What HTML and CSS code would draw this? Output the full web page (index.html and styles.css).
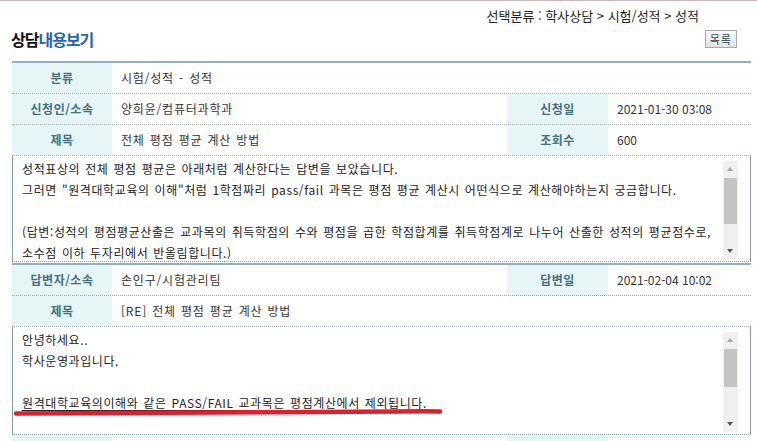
FILE: index.html
```html
<!DOCTYPE html>
<html lang="ko">
<head>
<meta charset="utf-8">
<title>상담내용보기</title>
<link rel="stylesheet" href="styles.css">
</head>
<body>
<div class="page">
  <div class="crumb">선택분류 : 학사상담 &gt; 시험/성적 &gt; 성적</div>
  <div class="titlebar">
    <h1 class="title">상담<span class="blue">내용보기</span></h1>
    <button class="btn">목록</button>
  </div>

  <div class="board">
    <div class="row">
      <div class="th">분류</div>
      <div class="td wide">시험/성적 - 성적</div>
    </div>
    <div class="row">
      <div class="th">신청인/소속</div>
      <div class="td">양희윤/컴퓨터과학과</div>
      <div class="th">신청일</div>
      <div class="td num">2021-01-30 03:08</div>
    </div>
    <div class="row">
      <div class="th">제목</div>
      <div class="td">전체 평점 평균 계산 방법</div>
      <div class="th">조회수</div>
      <div class="td num">600</div>
    </div>
    <div class="box box-q">
      <div class="text">성적표상의 전체 평점 평균은 아래처럼 계산한다는 답변을 보았습니다.<br>그러면 "원격대학교육의 이해"처럼 1학점짜리 pass/fail 과목은 평점 평균 계산시 어떤식으로 계산해야하는지 궁금합니다.<br><br>(답변:성적의 평점평균산출은 교과목의 취득학점의 수와 평점을 곱한 학점합계를 취득학점계로 나누어 산출한 성적의 평균점수로,<br>소수점 이하 두자리에서 반올림합니다.)</div>
      <div class="scroll scroll-q">
        <div class="arrow up"></div>
        <div class="track"><div class="thumb"></div></div>
        <div class="arrow down"></div>
      </div>
    </div>
  </div>

  <div class="board board-a">
    <div class="row">
      <div class="th">답변자/소속</div>
      <div class="td">손인구/시험관리팀</div>
      <div class="th">답변일</div>
      <div class="td num">2021-02-04 10:02</div>
    </div>
    <div class="row">
      <div class="th">제목</div>
      <div class="td wide">[RE] 전체 평점 평균 계산 방법</div>
    </div>
    <div class="box box-a">
      <div class="text">안녕하세요..<br>학사운영과입니다.<br><br><span class="ul">원격대학교육의이해와 같은 PASS/FAIL 교과목은 평점계산에서 제외됩니다.</span></div>
      <div class="scroll scroll-a">
        <div class="arrow up"></div>
        <div class="track"><div class="thumb"></div></div>
        <div class="arrow down"></div>
      </div>
      <svg class="mark" width="440" height="12" viewBox="0 0 440 12"><path d="M3 7.5 C 80 7, 200 6.5, 300 6 S 410 5, 427 5.5" fill="none" stroke="#e41d2b" stroke-width="4.5" stroke-linecap="round"/></svg>
    </div>
    <div class="row">
      <div class="th"></div>
      <div class="td"></div>
      <div class="th"></div>
      <div class="td"></div>
    </div>
  </div>
</div>
</body>
</html>
```

FILE: styles.css
```css
* { box-sizing: border-box; }
html, body { margin: 0; padding: 0; background: #fff; }
body {
  font-family: "Noto Sans CJK KR", "Noto Sans", sans-serif;
  font-size: 12px;
  color: #333;
  border-top: 1px solid #c9b9bd;
  overflow: hidden;
}
.page { width: 757px; height: 440px; overflow: hidden; }

.crumb {
  height: 23px;
  padding: 7px 58px 0 0;
  text-align: right;
  font-size: 13px;
  line-height: 16px;
  color: #222;
}
.titlebar {
  height: 30px;
  margin-bottom: 7px;
  padding: 0 20px 0 11px;
  display: flex;
  align-items: center;
  justify-content: space-between;
}
.title {
  margin: 0;
  font-size: 16px;
  font-weight: 700;
  letter-spacing: -1px;
  color: #111;
  line-height: 18px;
}
.title .blue { color: #2366b0; }
.btn {
  height: 18px;
  padding: 0 4px;
  font-family: inherit;
  font-size: 11px;
  line-height: 16px;
  color: #2c4a5a;
  background: linear-gradient(#fbfbfb, #e2e2e2);
  border: 1px solid #a9a9a9;
  border-radius: 0;
  letter-spacing: 1px;
}

.board {
  margin-left: 12px;
  width: 739px;
  border-top: 2px solid #8eb0bf;
}
.board-a { margin-top: 1px; }
.row {
  display: grid;
  grid-template-columns: 100px 395px 101px 1fr;
  height: 31px;
  border-bottom: 1px dotted #9aa6ab;
}
.th {
  background: #e6f5f5;
  color: #44707f;
  font-weight: 700;
  text-align: center;
  line-height: 30px;
  letter-spacing: 0.5px;
}
.td {
  padding-left: 9px;
  line-height: 30px;
  color: #333;
  letter-spacing: 0.8px;
  word-spacing: 1px;
}
.td.num { letter-spacing: 0; word-spacing: 0; }
.td.wide { grid-column: 2 / 5; }

.box {
  position: relative;
  display: flex;
  border-left: 1px solid #7f9ca8;
  border-right: 1px solid #7f9ca8;
  border-bottom: 1px dotted #7f9ca8;
}
.box-q { height: 106px; }
.box-a { height: 108px; }
.text {
  flex: 1;
  padding: 2px 0 0 9px;
  line-height: 21px;
  letter-spacing: 0.6px;
  word-spacing: 1px;
  color: #222;
  overflow: hidden;
  white-space: nowrap;
}
.ul { text-decoration: underline; text-underline-offset: 2px; }

.scroll {
  width: 15px;
  margin: 5px 12px 2px 0;
  background: #f0f0f0;
  display: flex;
  flex-direction: column;
}
.arrow { height: 17px; position: relative; }
.arrow::after {
  content: "";
  position: absolute;
  left: 4px;
  top: 6px;
  border-left: 3.5px solid transparent;
  border-right: 3.5px solid transparent;
}
.arrow.up::after { border-bottom: 4px solid #a6a6a6; }
.arrow.down::after { border-top: 4px solid #555; top: 7px; }
.track { flex: 1; padding: 0 1px; }
.thumb { background: #c4c4c4; }
.scroll-q .thumb { height: 46px; }
.scroll-a .thumb { height: 38px; }

.mark {
  position: absolute;
  left: 0;
  top: 79px;
}
```
